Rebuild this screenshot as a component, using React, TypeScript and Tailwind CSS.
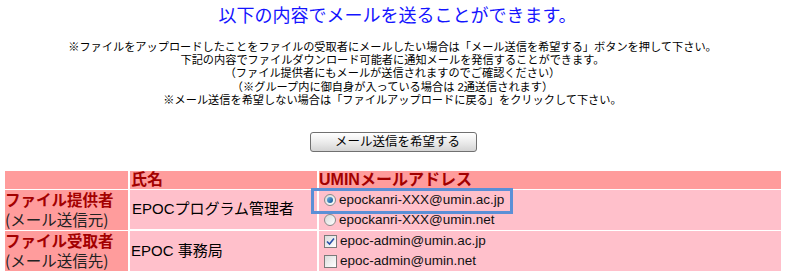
const jp = "font-['Liberation_Sans','Noto_Sans_CJK_JP',sans-serif]";

const notes = [
  "※ファイルをアップロードしたことをファイルの受取者にメールしたい場合は「メール送信を希望する」ボタンを押して下さい。",
  "下記の内容でファイルダウンロード可能者に通知メールを発信することができます。",
  "（ファイル提供者にもメールが送信されますのでご確認ください）",
  "（※グループ内に御自身が入っている場合は 2通送信されます）",
  "※メール送信を希望しない場合は「ファイルアップロードに戻る」をクリックして下さい。",
];

function Radio({ checked }: { checked?: boolean }) {
  return (
    <span className="flex h-[12px] w-[12px] shrink-0 items-center justify-center rounded-full border border-[#8a8a8a] bg-gradient-to-br from-[#d8d8d8] to-white">
      {checked && <span className="h-[6px] w-[6px] rounded-full bg-gradient-to-br from-[#6fb6e8] to-[#0b4f91]" />}
    </span>
  );
}

function Check({ checked }: { checked?: boolean }) {
  return (
    <span className="flex h-[13px] w-[13px] shrink-0 items-center justify-center border border-[#7a7a7a] bg-gradient-to-br from-[#dcdcdc] to-white">
      {checked && (
        <svg width="9" height="9" viewBox="0 0 9 9">
          <path d="M1 4.5 L3.5 7 L8 1.5" fill="none" stroke="#2a4fa8" strokeWidth="1.6" />
        </svg>
      )}
    </span>
  );
}

function Option({ kind, checked, label }: { kind: "radio" | "check"; checked?: boolean; label: string }) {
  return (
    <div className="flex h-[20px] items-center gap-[3px] pl-[5px]">
      {kind === "radio" ? <Radio checked={checked} /> : <Check checked={checked} />}
      <span className="text-[13.5px] leading-[20px] text-[#111]">{label}</span>
    </div>
  );
}

function RoleCell({ title, sub }: { title: string; sub: string }) {
  return (
    <div className="flex flex-col justify-center bg-[#ff9c9c]">
      <div className="text-[15.5px] font-bold leading-[19px] text-[#a30000]">{title}</div>
      <div className="font-['Noto_Sans_CJK_JP',sans-serif] text-[15.5px] leading-[19px] text-[#222]">{sub}</div>
    </div>
  );
}

export default function App() {
  return (
    <div className={`h-[276px] w-[785px] overflow-hidden bg-white ${jp}`}>
      <h1 className="pt-[5px] pl-[10px] text-center text-[18px] leading-[22px] text-[#1414ff]">
        以下の内容でメールを送ることができます。
      </h1>

      <div className="mt-[14px] text-center text-[11.2px] leading-[13.2px] text-black">
        {notes.map((n) => (
          <div key={n}>{n}</div>
        ))}
      </div>

      <div className="mt-[25px] flex justify-center">
        <button className="ml-[2px] h-[20px] w-[167px] rounded-[3px] border border-[#707070] bg-gradient-to-b from-white via-[#ececec] to-[#d4d4d4] pl-[24px] text-left text-[12.5px] leading-[18px] text-black">
          メール送信を希望する
        </button>
      </div>

      <div className="relative ml-[5px] mt-[19px] grid w-[776px] grid-cols-[123px_187px_1fr] gap-x-[2px] gap-y-px bg-white">
        <div className="h-[18px] bg-[#ff9c9c]" />
        <div className="h-[18px] bg-[#ff9c9c] pl-[1px] text-[16px] font-bold leading-[18px] text-[#a30000]">氏名</div>
        <div className="h-[18px] bg-[#ff9c9c] text-[16px] font-bold leading-[18px] text-[#a30000]">UMINメールアドレス</div>

        <RoleCell title="ファイル提供者" sub="(メール送信元)" />
        <div className="flex h-[39px] items-center bg-[#ffc0cb] pl-[2px] text-[15px] text-black">EPOCプログラム管理者</div>
        <div className="flex flex-col bg-[#ffc0cb]">
          <Option kind="radio" checked label="epockanri-XXX@umin.ac.jp" />
          <Option kind="radio" label="epockanri-XXX@umin.net" />
        </div>

        <RoleCell title="ファイル受取者" sub="(メール送信先)" />
        <div className="flex h-[40px] items-center bg-[#ffc0cb] pl-[1px] text-[15px] text-black">EPOC 事務局</div>
        <div className="flex flex-col bg-[#ffc0cb]">
          <Option kind="check" checked label="epoc-admin@umin.ac.jp" />
          <Option kind="check" label="epoc-admin@umin.net" />
        </div>

        <div className="pointer-events-none absolute left-[306px] top-[17px] h-[26px] w-[202px] border-[3px] border-[#5b8fd6]" />
      </div>
    </div>
  );
}
